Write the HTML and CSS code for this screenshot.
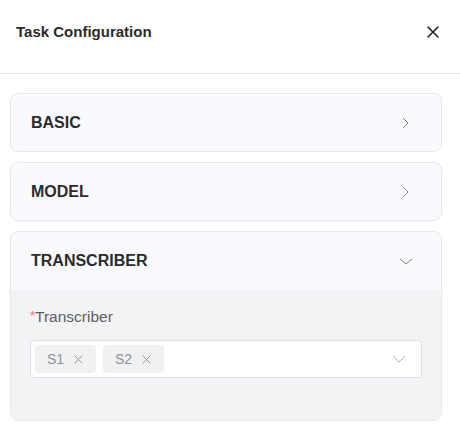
FILE: index.html
```html
<!DOCTYPE html>
<html>
<head>
<meta charset="utf-8">
<link rel="stylesheet" href="styles.css">
</head>
<body>
<div class="drawer">
  <header class="drawer-header">
    <h1 class="drawer-title">Task Configuration</h1>
    <button class="close-btn" aria-label="Close">
      <svg width="12" height="12" viewBox="0 0 12 12"><path d="M1 1L11 11M11 1L1 11" stroke="#1f1f1f" stroke-width="1.6" fill="none" stroke-linecap="round"/></svg>
    </button>
  </header>
  <div class="drawer-body">
    <section class="panel">
      <div class="panel-head">
        <span class="panel-title">BASIC</span>
        <svg class="chev" width="12" height="12" viewBox="0 0 12 12"><path d="M4 1L9 6L4 11" stroke="#7d7d7d" stroke-width="1" fill="none"/></svg>
      </div>
    </section>
    <section class="panel">
      <div class="panel-head">
        <span class="panel-title">MODEL</span>
        <svg class="chev" width="12" height="12" viewBox="0 0 12 12"><path d="M4 1L9 6L4 11" stroke="#7d7d7d" stroke-width="1" fill="none"/></svg>
      </div>
    </section>
    <section class="panel open">
      <div class="panel-head">
        <span class="panel-title">TRANSCRIBER</span>
        <svg class="chev" width="14" height="12" viewBox="0 0 14 12"><path d="M1 4L7 9L13 4" stroke="#7d7d7d" stroke-width="1" fill="none"/></svg>
      </div>
      <div class="panel-content">
        <label class="field-label"><span class="req">*</span>Transcriber</label>
        <div class="select">
          <div class="tags">
            <span class="tag">S1<svg class="tag-x" width="9" height="9" viewBox="0 0 9 9"><path d="M0.5 0.5L8.5 8.5M8.5 0.5L0.5 8.5" stroke="#9a9a9a" stroke-width="1" fill="none"/></svg></span>
            <span class="tag">S2<svg class="tag-x" width="9" height="9" viewBox="0 0 9 9"><path d="M0.5 0.5L8.5 8.5M8.5 0.5L0.5 8.5" stroke="#9a9a9a" stroke-width="1" fill="none"/></svg></span>
          </div>
          <svg class="select-chev" width="14" height="10" viewBox="0 0 14 10"><path d="M1 2L7 8L13 2" stroke="#b3b3b3" stroke-width="1" fill="none"/></svg>
        </div>
      </div>
    </section>
  </div>
</div>
</body>
</html>
```

FILE: styles.css
```css
* { box-sizing: border-box; }
body {
  margin: 0;
  background: #ffffff;
  font-family: "Liberation Sans", Arial, sans-serif;
  color: #2b2b2b;
}
.drawer { width: 460px; }
.drawer-header {
  height: 74px;
  border-bottom: 1px solid #e6e6e6;
  display: flex;
  align-items: center;
  justify-content: space-between;
  padding: 0 21px 10px 16px;
}
.drawer-title {
  margin: 0;
  font-size: 15px;
  font-weight: bold;
  color: #2a2a2a;
}
.close-btn {
  border: 0;
  background: none;
  padding: 0;
  width: 12px;
  height: 12px;
  display: flex;
}
.drawer-body {
  padding: 19px 18px 0 10px;
  display: flex;
  flex-direction: column;
  gap: 10px;
}
.panel {
  border: 1px solid #e6e8ee;
  border-radius: 8px;
  background: #f9fafd;
  overflow: hidden;
}
.panel-head {
  height: 57px;
  display: flex;
  align-items: center;
  justify-content: space-between;
  padding: 0 30px 0 20px;
}
.panel.open .panel-head { height: 58px; padding-right: 28px; }
.panel-title {
  font-size: 16px;
  font-weight: bold;
  color: #2b2b2b;
}
.panel-content {
  background: #f2f3f5;
  padding: 17px 19px 42px 19px;
}
.field-label {
  display: block;
  font-size: 15.5px;
  color: #5e5e5e;
  line-height: 18px;
  margin-bottom: 14px;
}
.req { color: #f56c6c; font-size: 13px; vertical-align: 2px; }
.select {
  height: 38px;
  background: #ffffff;
  border: 1px solid #dcdfe6;
  border-radius: 4px;
  display: flex;
  align-items: center;
  justify-content: space-between;
  padding: 0 15px 0 4px;
}
.tags { display: flex; gap: 7px; }
.tag {
  display: flex;
  align-items: center;
  height: 28px;
  width: 61px;
  padding: 0 0 0 12px;
  background: #f0f1f3;
  border-radius: 4px;
  font-size: 14px;
  color: #909399;
  gap: 10px;
}
.tag-x { display: block; }
.select-chev { display: block; }
```
